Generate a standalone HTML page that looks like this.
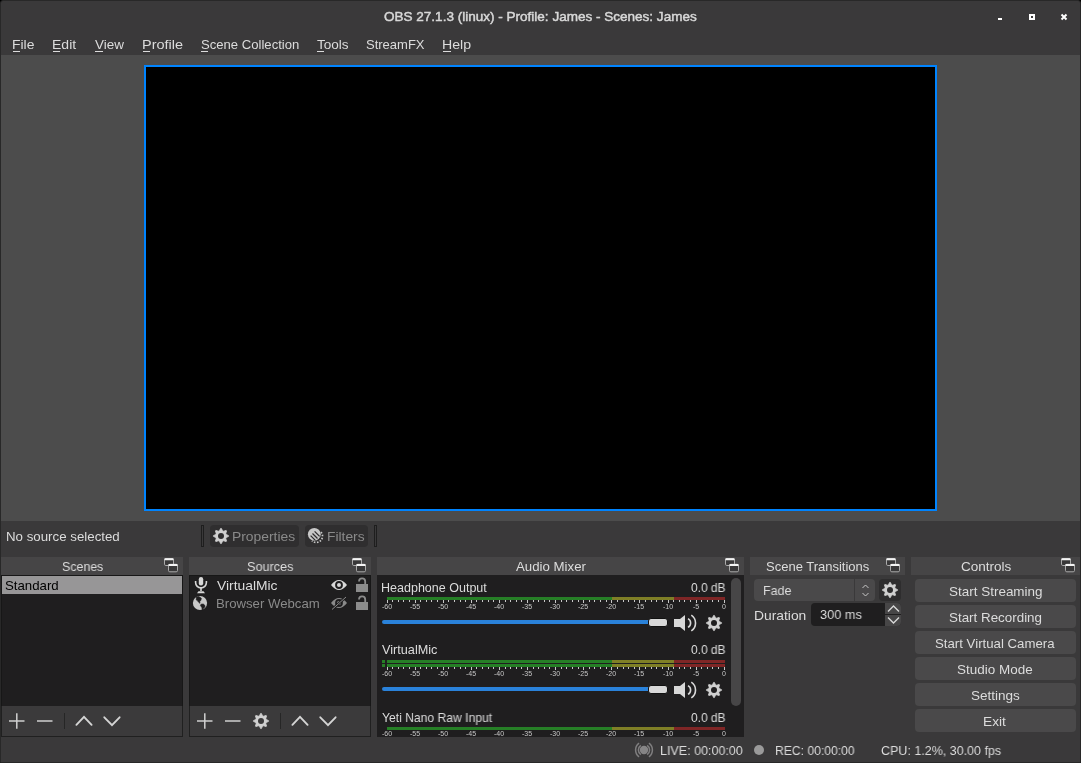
<!DOCTYPE html><html><head><meta charset="utf-8"><style>
*{margin:0;padding:0;box-sizing:border-box}
html,body{width:1081px;height:763px;overflow:hidden;background:#000}
body{font-family:"Liberation Sans",sans-serif;font-size:13px;color:#dcdcdc;position:relative}
.a{position:absolute}
.t{position:absolute;white-space:nowrap;line-height:13px;font-size:13px;will-change:transform}
.win{left:0;top:0;width:1081px;height:763px;background:#3a393a;border:1px solid #282828;border-radius:3px 3px 0 0}
.ul{position:absolute;height:1px;background:#dcdcdc;top:51px}
.dt{position:absolute;top:557px;height:18px;background:#464546}
.dtt{position:absolute;top:561px;line-height:13px;white-space:nowrap;text-align:center}
.list{position:absolute;top:575px;height:131px;background:#1f1e1f;border:1px solid #171717;border-bottom:none}
.tb{position:absolute;top:706px;height:31px;background:#3b3a3b;border:1px solid #202020;border-top:none}
.btn{position:absolute;left:915px;width:161px;height:23px;background:#4a494a;border-radius:4px;text-align:center;line-height:23px}
svg.ov{position:absolute;left:0;top:0;overflow:visible}
.lbl{position:absolute;will-change:transform;font-size:7px;line-height:7px;color:#c8c8c8;white-space:nowrap;text-align:center;width:20px}
</style></head><body>
<div class="a win"></div>
<div class="t" style="left:384.17px;top:10.83px;font-size:12.60px;line-height:12.60px;transform-origin:0 0;transform:scaleX(1.0740);color:#d8d8d8;-webkit-text-stroke:0.45px #d8d8d8;">OBS 27.1.3 (linux) - Profile: James - Scenes: James</div>
<div class="a" style="left:998px;top:18px;width:4px;height:2px;background:#fff"></div>
<div class="a" style="left:1029px;top:14px;width:6px;height:6px;border:2px solid #fff"></div>
<div class="t" style="left:12.16px;top:38.10px;font-size:13.00px;line-height:13.00px;transform-origin:0 0;transform:scaleX(1.0684);color:#dcdcdc;">File</div>
<div class="ul" style="left:13px;width:7px"></div>
<div class="t" style="left:52.15px;top:38.10px;font-size:13.00px;line-height:13.00px;transform-origin:0 0;transform:scaleX(1.0776);color:#dcdcdc;">Edit</div>
<div class="ul" style="left:53px;width:7px"></div>
<div class="t" style="left:94.94px;top:38.10px;font-size:13.00px;line-height:13.00px;transform-origin:0 0;transform:scaleX(1.0345);color:#dcdcdc;">View</div>
<div class="ul" style="left:95px;width:8px"></div>
<div class="t" style="left:142.02px;top:38.10px;font-size:13.00px;line-height:13.00px;transform-origin:0 0;transform:scaleX(1.1149);color:#dcdcdc;">Profile</div>
<div class="ul" style="left:143px;width:7px"></div>
<div class="t" style="left:200.67px;top:38.10px;font-size:13.00px;line-height:13.00px;transform-origin:0 0;transform:scaleX(1.0077);color:#dcdcdc;">Scene Collection</div>
<div class="ul" style="left:201px;width:7px"></div>
<div class="t" style="left:317.07px;top:38.10px;font-size:13.00px;line-height:13.00px;transform-origin:0 0;transform:scaleX(1.0430);color:#dcdcdc;">Tools</div>
<div class="ul" style="left:317px;width:7px"></div>
<div class="t" style="left:366.38px;top:38.10px;font-size:13.00px;line-height:13.00px;transform-origin:0 0;transform:scaleX(0.9926);color:#dcdcdc;">StreamFX</div>
<div class="t" style="left:441.85px;top:38.10px;font-size:13.00px;line-height:13.00px;transform-origin:0 0;transform:scaleX(1.0866);color:#dcdcdc;">Help</div>
<div class="ul" style="left:443px;width:8px"></div>
<div class="a" style="left:1px;top:55px;width:1079px;height:466px;background:#4c4c4c"></div>
<div class="a" style="left:144px;top:65px;width:793px;height:446px;background:#000;border:2px solid #0084ff"></div>
<div class="t" style="left:6.11px;top:530.00px;font-size:13.00px;line-height:13.00px;transform-origin:0 0;transform:scaleX(1.0222);color:#dcdcdc;">No source selected</div>
<div class="a" style="left:201px;top:525px;width:3px;height:22px;border:1px solid #1e1e1e;background:#3a393a"></div>
<div class="a" style="left:210px;top:525px;width:89px;height:22px;background:#2f2e2f;border-radius:4px"></div>
<div class="t" style="left:232.37px;top:530.00px;font-size:13.00px;line-height:13.00px;transform-origin:0 0;transform:scaleX(1.0649);color:#8a8a8a;">Properties</div>
<div class="a" style="left:305px;top:525px;width:63px;height:22px;background:#2f2e2f;border-radius:4px"></div>
<div class="t" style="left:327.37px;top:530.00px;font-size:13.00px;line-height:13.00px;transform-origin:0 0;transform:scaleX(1.0627);color:#8a8a8a;">Filters</div>
<div class="a" style="left:374px;top:525px;width:3px;height:22px;border:1px solid #1e1e1e;background:#3a393a"></div>
<div class="dt" style="left:1px;width:182px"></div>
<div class="t" style="left:61.60px;top:559.90px;font-size:13.00px;line-height:13.00px;transform-origin:0 0;transform:scaleX(0.9524);color:#dcdcdc;">Scenes</div>
<div class="dt" style="left:189px;width:182px"></div>
<div class="t" style="left:247.19px;top:559.90px;font-size:13.00px;line-height:13.00px;transform-origin:0 0;transform:scaleX(0.9716);color:#dcdcdc;">Sources</div>
<div class="dt" style="left:377px;width:367px"></div>
<div class="t" style="left:515.84px;top:559.90px;font-size:13.00px;line-height:13.00px;transform-origin:0 0;transform:scaleX(1.0194);color:#dcdcdc;">Audio Mixer</div>
<div class="dt" style="left:750px;width:155px"></div>
<div class="t" style="left:766.38px;top:559.90px;font-size:13.00px;line-height:13.00px;transform-origin:0 0;transform:scaleX(0.9956);color:#dcdcdc;">Scene Transitions</div>
<div class="dt" style="left:911px;width:169px"></div>
<div class="t" style="left:960.65px;top:559.90px;font-size:13.00px;line-height:13.00px;transform-origin:0 0;transform:scaleX(1.0406);color:#dcdcdc;">Controls</div>
<div class="list" style="left:1px;width:182px"></div>
<div class="a" style="left:2px;top:576px;width:180px;height:18px;background:#979697"></div>
<div class="t" style="left:4.91px;top:578.90px;font-size:13.00px;line-height:13.00px;transform-origin:0 0;transform:scaleX(1.0183);color:#000;">Standard</div>
<div class="tb" style="left:1px;width:182px"></div>
<div class="list" style="left:189px;width:182px"></div>
<div class="t" style="left:217.13px;top:578.90px;font-size:13.00px;line-height:13.00px;transform-origin:0 0;transform:scaleX(1.0643);color:#dcdcdc;">VirtualMic</div>
<div class="t" style="left:216.42px;top:596.80px;font-size:13.00px;line-height:13.00px;transform-origin:0 0;transform:scaleX(1.0136);color:#8a8a8a;">Browser Webcam</div>
<div class="tb" style="left:189px;width:182px"></div>
<div class="a" style="left:377px;top:575px;width:367px;height:162px;background:#1f1e1f"></div>
<div class="a" style="left:731px;top:578px;width:10px;height:128px;background:#474647;border-radius:5px"></div>
<div class="t" style="left:381.29px;top:581.57px;font-size:12.20px;line-height:12.20px;transform-origin:0 0;transform:scaleX(1.0271);color:#dcdcdc;">Headphone Output</div>
<div class="t" style="left:690.52px;top:581.57px;font-size:12.20px;line-height:12.20px;transform-origin:0 0;transform:scaleX(0.9817);color:#dcdcdc;">0.0 dB</div>
<div class="a" style="left:387px;top:597px;width:225px;height:3px;background:#267f26"></div>
<div class="a" style="left:612px;top:597px;width:62px;height:3px;background:#7f7f26"></div>
<div class="a" style="left:674px;top:597px;width:51px;height:3px;background:#7f2626"></div>
<svg class="ov" width="1081" height="763"><path d="M387.5 600 v3 M392.5 600 v2 M398.5 600 v2 M403.5 600 v2 M409.5 600 v2 M415.5 600 v3 M420.5 600 v2 M426.5 600 v2 M431.5 600 v2 M437.5 600 v2 M443.5 600 v3 M448.5 600 v2 M454.5 600 v2 M460.5 600 v2 M465.5 600 v2 M471.5 600 v3 M476.5 600 v2 M482.5 600 v2 M488.5 600 v2 M493.5 600 v2 M499.5 600 v3 M505.5 600 v2 M510.5 600 v2 M516.5 600 v2 M521.5 600 v2 M527.5 600 v3 M533.5 600 v2 M538.5 600 v2 M544.5 600 v2 M549.5 600 v2 M555.5 600 v3 M561.5 600 v2 M566.5 600 v2 M572.5 600 v2 M578.5 600 v2 M583.5 600 v3 M589.5 600 v2 M594.5 600 v2 M600.5 600 v2 M606.5 600 v2 M611.5 600 v3 M617.5 600 v2 M623.5 600 v2 M628.5 600 v2 M634.5 600 v2 M639.5 600 v3 M645.5 600 v2 M651.5 600 v2 M656.5 600 v2 M662.5 600 v2 M668.5 600 v3 M673.5 600 v2 M679.5 600 v2 M684.5 600 v2 M690.5 600 v2 M696.5 600 v3 M701.5 600 v2 M707.5 600 v2 M712.5 600 v2 M718.5 600 v2 M724.5 600 v3 " stroke="#c8c8c8" stroke-width="1"/></svg>
<div class="lbl" style="left:376.9px;top:603px">-60</div>
<div class="lbl" style="left:404.9px;top:603px">-55</div>
<div class="lbl" style="left:432.9px;top:603px">-50</div>
<div class="lbl" style="left:460.9px;top:603px">-45</div>
<div class="lbl" style="left:488.9px;top:603px">-40</div>
<div class="lbl" style="left:516.9px;top:603px">-35</div>
<div class="lbl" style="left:544.9px;top:603px">-30</div>
<div class="lbl" style="left:572.9px;top:603px">-25</div>
<div class="lbl" style="left:600.9px;top:603px">-20</div>
<div class="lbl" style="left:628.9px;top:603px">-15</div>
<div class="lbl" style="left:657.9px;top:603px">-10</div>
<div class="lbl" style="left:685.9px;top:603px">-5</div>
<div class="lbl" style="left:713.9px;top:603px">0</div>
<div class="a" style="left:382px;top:620px;width:270px;height:4px;background:#2a82da;border-radius:2px"></div>
<div class="a" style="left:648px;top:618px;width:20px;height:9px;background:#d8d8d8;border:1px solid #111;border-radius:3px"></div>
<svg class="ov" width="1081" height="763"><path d="M674 619.0 h6 l5 -4 v16 l-5 -4 h-6z" fill="#d8d8d8"/><path d="M688 618.6 a5 5 0 0 1 0 8.8" fill="none" stroke="#d8d8d8" stroke-width="1.6"/><path d="M691.3 615.1 a9.5 9.5 0 0 1 0 15.8" fill="none" stroke="#d8d8d8" stroke-width="1.6"/><path d="M712.47 617.72 L713.64 615.41 L714.36 615.41 L715.53 617.72 A5.50 5.50 0 0 1 716.65 618.18 L719.11 617.38 L719.62 617.89 L718.82 620.35 A5.50 5.50 0 0 1 719.28 621.47 L721.59 622.64 L721.59 623.36 L719.28 624.53 A5.50 5.50 0 0 1 718.82 625.65 L719.62 628.11 L719.11 628.62 L716.65 627.82 A5.50 5.50 0 0 1 715.53 628.28 L714.36 630.59 L713.64 630.59 L712.47 628.28 A5.50 5.50 0 0 1 711.35 627.82 L708.89 628.62 L708.38 628.11 L709.18 625.65 A5.50 5.50 0 0 1 708.72 624.53 L706.41 623.36 L706.41 622.64 L708.72 621.47 A5.50 5.50 0 0 1 709.18 620.35 L708.38 617.89 L708.89 617.38 L711.35 618.18 A5.50 5.50 0 0 1 712.47 617.72 Z" fill="#d0d0d0" stroke="#d0d0d0" stroke-width="0.8" stroke-linejoin="round"/><circle cx="714.00" cy="623.00" r="3.00" fill="#1f1e1f"/></svg>
<div class="t" style="left:382.15px;top:644.47px;font-size:12.20px;line-height:12.20px;transform-origin:0 0;transform:scaleX(1.0402);color:#dcdcdc;">VirtualMic</div>
<div class="t" style="left:690.52px;top:644.47px;font-size:12.20px;line-height:12.20px;transform-origin:0 0;transform:scaleX(0.9817);color:#dcdcdc;">0.0 dB</div>
<div class="a" style="left:387px;top:660px;width:225px;height:3px;background:#267f26"></div>
<div class="a" style="left:612px;top:660px;width:62px;height:3px;background:#7f7f26"></div>
<div class="a" style="left:674px;top:660px;width:51px;height:3px;background:#7f2626"></div>
<div class="a" style="left:382px;top:660px;width:3px;height:3px;background:#267f26"></div>
<div class="a" style="left:387px;top:664px;width:225px;height:3px;background:#267f26"></div>
<div class="a" style="left:612px;top:664px;width:62px;height:3px;background:#7f7f26"></div>
<div class="a" style="left:674px;top:664px;width:51px;height:3px;background:#7f2626"></div>
<div class="a" style="left:382px;top:664px;width:3px;height:3px;background:#267f26"></div>
<svg class="ov" width="1081" height="763"><path d="M387.5 667 v3 M392.5 667 v2 M398.5 667 v2 M403.5 667 v2 M409.5 667 v2 M415.5 667 v3 M420.5 667 v2 M426.5 667 v2 M431.5 667 v2 M437.5 667 v2 M443.5 667 v3 M448.5 667 v2 M454.5 667 v2 M460.5 667 v2 M465.5 667 v2 M471.5 667 v3 M476.5 667 v2 M482.5 667 v2 M488.5 667 v2 M493.5 667 v2 M499.5 667 v3 M505.5 667 v2 M510.5 667 v2 M516.5 667 v2 M521.5 667 v2 M527.5 667 v3 M533.5 667 v2 M538.5 667 v2 M544.5 667 v2 M549.5 667 v2 M555.5 667 v3 M561.5 667 v2 M566.5 667 v2 M572.5 667 v2 M578.5 667 v2 M583.5 667 v3 M589.5 667 v2 M594.5 667 v2 M600.5 667 v2 M606.5 667 v2 M611.5 667 v3 M617.5 667 v2 M623.5 667 v2 M628.5 667 v2 M634.5 667 v2 M639.5 667 v3 M645.5 667 v2 M651.5 667 v2 M656.5 667 v2 M662.5 667 v2 M668.5 667 v3 M673.5 667 v2 M679.5 667 v2 M684.5 667 v2 M690.5 667 v2 M696.5 667 v3 M701.5 667 v2 M707.5 667 v2 M712.5 667 v2 M718.5 667 v2 M724.5 667 v3 " stroke="#c8c8c8" stroke-width="1"/></svg>
<div class="lbl" style="left:376.9px;top:670px">-60</div>
<div class="lbl" style="left:404.9px;top:670px">-55</div>
<div class="lbl" style="left:432.9px;top:670px">-50</div>
<div class="lbl" style="left:460.9px;top:670px">-45</div>
<div class="lbl" style="left:488.9px;top:670px">-40</div>
<div class="lbl" style="left:516.9px;top:670px">-35</div>
<div class="lbl" style="left:544.9px;top:670px">-30</div>
<div class="lbl" style="left:572.9px;top:670px">-25</div>
<div class="lbl" style="left:600.9px;top:670px">-20</div>
<div class="lbl" style="left:628.9px;top:670px">-15</div>
<div class="lbl" style="left:657.9px;top:670px">-10</div>
<div class="lbl" style="left:685.9px;top:670px">-5</div>
<div class="lbl" style="left:713.9px;top:670px">0</div>
<div class="a" style="left:382px;top:687px;width:270px;height:4px;background:#2a82da;border-radius:2px"></div>
<div class="a" style="left:648px;top:685px;width:20px;height:9px;background:#d8d8d8;border:1px solid #111;border-radius:3px"></div>
<svg class="ov" width="1081" height="763"><path d="M674 686.0 h6 l5 -4 v16 l-5 -4 h-6z" fill="#d8d8d8"/><path d="M688 685.6 a5 5 0 0 1 0 8.8" fill="none" stroke="#d8d8d8" stroke-width="1.6"/><path d="M691.3 682.1 a9.5 9.5 0 0 1 0 15.8" fill="none" stroke="#d8d8d8" stroke-width="1.6"/><path d="M712.47 684.72 L713.64 682.41 L714.36 682.41 L715.53 684.72 A5.50 5.50 0 0 1 716.65 685.18 L719.11 684.38 L719.62 684.89 L718.82 687.35 A5.50 5.50 0 0 1 719.28 688.47 L721.59 689.64 L721.59 690.36 L719.28 691.53 A5.50 5.50 0 0 1 718.82 692.65 L719.62 695.11 L719.11 695.62 L716.65 694.82 A5.50 5.50 0 0 1 715.53 695.28 L714.36 697.59 L713.64 697.59 L712.47 695.28 A5.50 5.50 0 0 1 711.35 694.82 L708.89 695.62 L708.38 695.11 L709.18 692.65 A5.50 5.50 0 0 1 708.72 691.53 L706.41 690.36 L706.41 689.64 L708.72 688.47 A5.50 5.50 0 0 1 709.18 687.35 L708.38 684.89 L708.89 684.38 L711.35 685.18 A5.50 5.50 0 0 1 712.47 684.72 Z" fill="#d0d0d0" stroke="#d0d0d0" stroke-width="0.8" stroke-linejoin="round"/><circle cx="714.00" cy="690.00" r="3.00" fill="#1f1e1f"/></svg>
<div class="t" style="left:381.90px;top:711.67px;font-size:12.20px;line-height:12.20px;transform-origin:0 0;transform:scaleX(0.9954);color:#dcdcdc;">Yeti Nano Raw Input</div>
<div class="t" style="left:690.52px;top:711.67px;font-size:12.20px;line-height:12.20px;transform-origin:0 0;transform:scaleX(0.9817);color:#dcdcdc;">0.0 dB</div>
<div class="a" style="left:387px;top:727px;width:225px;height:3px;background:#267f26"></div>
<div class="a" style="left:612px;top:727px;width:62px;height:3px;background:#7f7f26"></div>
<div class="a" style="left:674px;top:727px;width:51px;height:3px;background:#7f2626"></div>
<div class="lbl" style="left:376.9px;top:730px">-60</div>
<div class="lbl" style="left:404.9px;top:730px">-55</div>
<div class="lbl" style="left:432.9px;top:730px">-50</div>
<div class="lbl" style="left:460.9px;top:730px">-45</div>
<div class="lbl" style="left:488.9px;top:730px">-40</div>
<div class="lbl" style="left:516.9px;top:730px">-35</div>
<div class="lbl" style="left:544.9px;top:730px">-30</div>
<div class="lbl" style="left:572.9px;top:730px">-25</div>
<div class="lbl" style="left:600.9px;top:730px">-20</div>
<div class="lbl" style="left:628.9px;top:730px">-15</div>
<div class="lbl" style="left:657.9px;top:730px">-10</div>
<div class="lbl" style="left:685.9px;top:730px">-5</div>
<div class="lbl" style="left:713.9px;top:730px">0</div>
<div class="a" style="left:377px;top:737px;width:367px;height:25px;background:#3a393a"></div>
<div class="a" style="left:754px;top:579px;width:121px;height:22px;background:#4a494a;border-radius:4px"></div>
<div class="a" style="left:854px;top:579px;width:1px;height:22px;background:#3a393a"></div>
<div class="t" style="left:763.48px;top:584.00px;font-size:13.00px;line-height:13.00px;transform-origin:0 0;transform:scaleX(0.9571);color:#dcdcdc;">Fade</div>
<svg class="ov" width="1081" height="763"><path d="M862.5 588 l3 -3 l3 3 M862.5 593 l3 3 l3 -3" fill="none" stroke="#c8c8c8" stroke-width="1"/></svg>
<div class="a" style="left:879px;top:579px;width:22px;height:22px;background:#2e2d2e;border-radius:4px"></div>
<svg class="ov" width="1081" height="763"><path d="M888.47 584.72 L889.64 582.41 L890.36 582.41 L891.53 584.72 A5.50 5.50 0 0 1 892.65 585.18 L895.11 584.38 L895.62 584.89 L894.82 587.35 A5.50 5.50 0 0 1 895.28 588.47 L897.59 589.64 L897.59 590.36 L895.28 591.53 A5.50 5.50 0 0 1 894.82 592.65 L895.62 595.11 L895.11 595.62 L892.65 594.82 A5.50 5.50 0 0 1 891.53 595.28 L890.36 597.59 L889.64 597.59 L888.47 595.28 A5.50 5.50 0 0 1 887.35 594.82 L884.89 595.62 L884.38 595.11 L885.18 592.65 A5.50 5.50 0 0 1 884.72 591.53 L882.41 590.36 L882.41 589.64 L884.72 588.47 A5.50 5.50 0 0 1 885.18 587.35 L884.38 584.89 L884.89 584.38 L887.35 585.18 A5.50 5.50 0 0 1 888.47 584.72 Z" fill="#d0d0d0" stroke="#d0d0d0" stroke-width="0.8" stroke-linejoin="round"/><circle cx="890.00" cy="590.00" r="3.00" fill="#2e2d2e"/></svg>
<div class="t" style="left:753.57px;top:608.70px;font-size:13.00px;line-height:13.00px;transform-origin:0 0;transform:scaleX(1.0646);color:#dcdcdc;">Duration</div>
<div class="a" style="left:811px;top:603px;width:90px;height:23px;background:#1f1e1f;border-radius:4px"></div>
<div class="t" style="left:820.31px;top:607.50px;font-size:13.00px;line-height:13.00px;transform-origin:0 0;transform:scaleX(0.9811);color:#dcdcdc;">300 ms</div>
<div class="a" style="left:885px;top:603px;width:16px;height:11px;background:#474647;border-radius:0 4px 0 0"></div>
<div class="a" style="left:885px;top:615px;width:16px;height:11px;background:#474647;border-radius:0 0 4px 0"></div>
<svg class="ov" width="1081" height="763"><path d="M888 611.5 l5.5 -5.5 l5.5 5.5 M888 617.5 l5.5 5.5 l5.5 -5.5" fill="none" stroke="#d8d8d8" stroke-width="1.4"/></svg>
<div class="btn" style="top:579px"></div>
<div class="t" style="left:948.55px;top:585.00px;font-size:13.00px;line-height:13.00px;transform-origin:0 0;transform:scaleX(1.0359);color:#dcdcdc;">Start Streaming</div>
<div class="btn" style="top:605px"></div>
<div class="t" style="left:949.06px;top:611.00px;font-size:13.00px;line-height:13.00px;transform-origin:0 0;transform:scaleX(1.0295);color:#dcdcdc;">Start Recording</div>
<div class="btn" style="top:631px"></div>
<div class="t" style="left:935.06px;top:637.00px;font-size:13.00px;line-height:13.00px;transform-origin:0 0;transform:scaleX(1.0176);color:#dcdcdc;">Start Virtual Camera</div>
<div class="btn" style="top:657px"></div>
<div class="t" style="left:957.35px;top:663.00px;font-size:13.00px;line-height:13.00px;transform-origin:0 0;transform:scaleX(1.0360);color:#dcdcdc;">Studio Mode</div>
<div class="btn" style="top:683px"></div>
<div class="t" style="left:970.85px;top:689.00px;font-size:13.00px;line-height:13.00px;transform-origin:0 0;transform:scaleX(1.0405);color:#dcdcdc;">Settings</div>
<div class="btn" style="top:709px"></div>
<div class="t" style="left:983.48px;top:715.00px;font-size:13.00px;line-height:13.00px;transform-origin:0 0;transform:scaleX(1.0537);color:#dcdcdc;">Exit</div>
<div class="t" style="left:659.68px;top:744.20px;font-size:13.00px;line-height:13.00px;transform-origin:0 0;transform:scaleX(0.9621);color:#dcdcdc;">LIVE: 00:00:00</div>
<div class="a" style="left:754px;top:745px;width:10px;height:10px;border-radius:50%;background:#9a9a9a"></div>
<div class="t" style="left:774.81px;top:744.20px;font-size:13.00px;line-height:13.00px;transform-origin:0 0;transform:scaleX(0.9337);color:#dcdcdc;">REC: 00:00:00</div>
<div class="t" style="left:881.00px;top:744.20px;font-size:13.00px;line-height:13.00px;transform-origin:0 0;transform:scaleX(0.9610);color:#dcdcdc;">CPU: 1.2%, 30.00 fps</div>
<svg class="ov" width="1081" height="763"><path d="M1061.5 14.5L1066.5 19.5M1066.5 14.5L1061.5 19.5" stroke="#fff" stroke-width="2"/><rect x="164.5" y="558.5" width="9" height="7" rx="1.3" fill="#393839" stroke="#aaaaaa" stroke-width="1"/><rect x="164.4" y="558.3" width="9.2" height="1.9" rx="0.6" fill="#f4f4f4"/><rect x="168.5" y="564.3" width="9" height="7.5" rx="1.3" fill="#393839" stroke="#aaaaaa" stroke-width="1"/><rect x="168.4" y="564.1" width="9.2" height="1.9" rx="0.6" fill="#f4f4f4"/><rect x="352.5" y="558.5" width="9" height="7" rx="1.3" fill="#393839" stroke="#aaaaaa" stroke-width="1"/><rect x="352.4" y="558.3" width="9.2" height="1.9" rx="0.6" fill="#f4f4f4"/><rect x="356.5" y="564.3" width="9" height="7.5" rx="1.3" fill="#393839" stroke="#aaaaaa" stroke-width="1"/><rect x="356.4" y="564.1" width="9.2" height="1.9" rx="0.6" fill="#f4f4f4"/><rect x="725.5" y="558.5" width="9" height="7" rx="1.3" fill="#393839" stroke="#aaaaaa" stroke-width="1"/><rect x="725.4" y="558.3" width="9.2" height="1.9" rx="0.6" fill="#f4f4f4"/><rect x="729.5" y="564.3" width="9" height="7.5" rx="1.3" fill="#393839" stroke="#aaaaaa" stroke-width="1"/><rect x="729.4" y="564.1" width="9.2" height="1.9" rx="0.6" fill="#f4f4f4"/><rect x="886.5" y="558.5" width="9" height="7" rx="1.3" fill="#393839" stroke="#aaaaaa" stroke-width="1"/><rect x="886.4" y="558.3" width="9.2" height="1.9" rx="0.6" fill="#f4f4f4"/><rect x="890.5" y="564.3" width="9" height="7.5" rx="1.3" fill="#393839" stroke="#aaaaaa" stroke-width="1"/><rect x="890.4" y="564.1" width="9.2" height="1.9" rx="0.6" fill="#f4f4f4"/><rect x="1061.5" y="558.5" width="9" height="7" rx="1.3" fill="#393839" stroke="#aaaaaa" stroke-width="1"/><rect x="1061.4" y="558.3" width="9.2" height="1.9" rx="0.6" fill="#f4f4f4"/><rect x="1065.5" y="564.3" width="9" height="7.5" rx="1.3" fill="#393839" stroke="#aaaaaa" stroke-width="1"/><rect x="1065.4" y="564.1" width="9.2" height="1.9" rx="0.6" fill="#f4f4f4"/><path d="M219.47 530.72 L220.64 528.41 L221.36 528.41 L222.53 530.72 A5.50 5.50 0 0 1 223.65 531.18 L226.11 530.38 L226.62 530.89 L225.82 533.35 A5.50 5.50 0 0 1 226.28 534.47 L228.59 535.64 L228.59 536.36 L226.28 537.53 A5.50 5.50 0 0 1 225.82 538.65 L226.62 541.11 L226.11 541.62 L223.65 540.82 A5.50 5.50 0 0 1 222.53 541.28 L221.36 543.59 L220.64 543.59 L219.47 541.28 A5.50 5.50 0 0 1 218.35 540.82 L215.89 541.62 L215.38 541.11 L216.18 538.65 A5.50 5.50 0 0 1 215.72 537.53 L213.41 536.36 L213.41 535.64 L215.72 534.47 A5.50 5.50 0 0 1 216.18 533.35 L215.38 530.89 L215.89 530.38 L218.35 531.18 A5.50 5.50 0 0 1 219.47 530.72 Z" fill="#d0d0d0" stroke="#d0d0d0" stroke-width="0.8" stroke-linejoin="round"/><circle cx="221.00" cy="536.00" r="3.00" fill="#2f2e2f"/><defs><clipPath id="fc"><circle cx="314.3" cy="534.3" r="6.4"/></clipPath></defs><circle cx="314.3" cy="534.3" r="6.4" fill="#c8c8c8"/><g clip-path="url(#fc)"><path d="M310.6 535.6 l5 5 M312.5 533.5 l5 5 M314.6 531.4 l5 5" stroke="#2f2e2f" stroke-width="1.3"/></g><path d="M321.02 532.12 A6.30 6.30 0 0 1 311.97 540.85" fill="none" stroke="#c8c8c8" stroke-width="1.7" stroke-dasharray="1.5 1.45"/><rect x="198.8" y="577" width="4.4" height="8.4" rx="2.2" fill="#d8d8d8"/><path d="M195.6 581 v1.5 a5.4 5.4 0 0 0 10.8 0 v-1.5" fill="none" stroke="#d8d8d8" stroke-width="1.6"/><path d="M201 588 v3" stroke="#d8d8d8" stroke-width="1.6"/><path d="M197 593.3 l1.5 -2 h5 l1.5 2z" fill="#d8d8d8"/><circle cx="200" cy="603" r="7.1" fill="#c8c8c8"/><path d="M196.6 596.9 L198.8 596.6 L201.3 598.2 L200.9 600.2 L199.8 601.4 L199.9 603.3 L198.6 602.2 L197.4 600.6 L196.2 599.8Z" fill="#1f1e1f" stroke="#1f1e1f" stroke-width="0.7" stroke-linejoin="round"/><path d="M201.1 604.2 L203.3 604.1 L204.8 605.3 L204.9 607 L203.3 608.4 L202.4 610.2 L201.9 607.6 L201.1 606.4 L200.5 605.3Z" fill="#1f1e1f" stroke="#1f1e1f" stroke-width="0.7" stroke-linejoin="round"/><path d="M331 585 Q339 575 347 585 Q339 595 331 585z" fill="#d8d8d8"/><circle cx="339" cy="585" r="2.95" fill="none" stroke="#1f1e1f" stroke-width="1.9"/><path d="M331 603 Q339 593 347 603 Q339 613 331 603z" fill="#8a8a8a"/><circle cx="339" cy="603" r="2.95" fill="none" stroke="#1f1e1f" stroke-width="1.9"/><path d="M332 609.5 L346 597" stroke="#1f1e1f" stroke-width="2.4"/><path d="M332 609.5 L346 597" stroke="#8a8a8a" stroke-width="1"/><rect x="356" y="584" width="12" height="8" fill="#8c8c8c"/><path d="M359 581.5 a3.1 3.1 0 0 1 6.2 0 v2.8" fill="none" stroke="#8c8c8c" stroke-width="1.8"/><rect x="356" y="602" width="12" height="8" fill="#8c8c8c"/><path d="M359 599.5 a3.1 3.1 0 0 1 6.2 0 v2.8" fill="none" stroke="#8c8c8c" stroke-width="1.8"/><path d="M9.0 721 h15.5 M16.8 713.2 v15.5" stroke="#d0d0d0" stroke-width="1.5"/><path d="M37.0 721 h15.5" stroke="#d0d0d0" stroke-width="1.5"/><path d="M64.5 713 v16" stroke="#262626" stroke-width="1"/><path d="M76.4 724.8 l7.6 -7.9 l7.6 7.9" fill="none" stroke="#d4d4d4" stroke-width="1.9" stroke-linecap="round"/><path d="M104.3 717.3 l7.7 7.9 l7.6 -7.9" fill="none" stroke="#d4d4d4" stroke-width="1.9" stroke-linecap="round"/><path d="M197.0 721 h15.5 M204.8 713.2 v15.5" stroke="#d0d0d0" stroke-width="1.5"/><path d="M225.0 721 h15.5" stroke="#d0d0d0" stroke-width="1.5"/><path d="M259.47 715.72 L260.64 713.41 L261.36 713.41 L262.53 715.72 A5.50 5.50 0 0 1 263.65 716.18 L266.11 715.38 L266.62 715.89 L265.82 718.35 A5.50 5.50 0 0 1 266.28 719.47 L268.59 720.64 L268.59 721.36 L266.28 722.53 A5.50 5.50 0 0 1 265.82 723.65 L266.62 726.11 L266.11 726.62 L263.65 725.82 A5.50 5.50 0 0 1 262.53 726.28 L261.36 728.59 L260.64 728.59 L259.47 726.28 A5.50 5.50 0 0 1 258.35 725.82 L255.89 726.62 L255.38 726.11 L256.18 723.65 A5.50 5.50 0 0 1 255.72 722.53 L253.41 721.36 L253.41 720.64 L255.72 719.47 A5.50 5.50 0 0 1 256.18 718.35 L255.38 715.89 L255.89 715.38 L258.35 716.18 A5.50 5.50 0 0 1 259.47 715.72 Z" fill="#d0d0d0" stroke="#d0d0d0" stroke-width="0.8" stroke-linejoin="round"/><circle cx="261.00" cy="721.00" r="3.00" fill="#3b3a3b"/><path d="M280.5 713 v16" stroke="#262626" stroke-width="1"/><path d="M292.4 724.8 l7.6 -7.9 l7.6 7.9" fill="none" stroke="#d4d4d4" stroke-width="1.9" stroke-linecap="round"/><path d="M320.3 717.3 l7.7 7.9 l7.6 -7.9" fill="none" stroke="#d4d4d4" stroke-width="1.9" stroke-linecap="round"/><circle cx="644" cy="750" r="4.2" fill="#868586"/><path d="M640.79 745.41 A5.60 5.60 0 0 0 640.79 754.59 M647.21 745.41 A5.60 5.60 0 0 1 647.21 754.59" fill="none" stroke="#7f7e7f" stroke-width="1.5"/><path d="M639.06 743.20 A8.40 8.40 0 0 0 639.06 756.80 M648.94 743.20 A8.40 8.40 0 0 1 648.94 756.80" fill="none" stroke="#7f7e7f" stroke-width="1.5"/></svg>
</body></html>
